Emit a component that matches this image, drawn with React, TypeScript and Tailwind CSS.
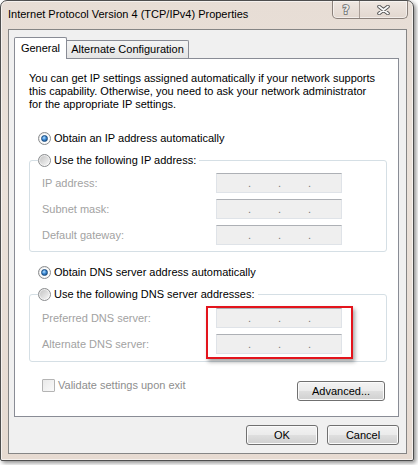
import React from "react";

function Radio({ checked }: { checked?: boolean }) {
  return (
    <span className="w-[13px] h-[13px] rounded-full border border-[#8a8c8e] bg-[linear-gradient(135deg,#e4e4e4,#ffffff)] flex items-center justify-center shrink-0">
      {checked ? (
        <span className="w-[9px] h-[9px] rounded-full bg-white flex items-center justify-center">
          <span className="w-[7px] h-[7px] rounded-full border border-[#1b4c7e] bg-[radial-gradient(circle_at_40%_35%,#b8e2ff_0%,#3d8ad6_45%,#0f3f75_100%)]" />
        </span>
      ) : (
        <span className="w-[9px] h-[9px] rounded-full bg-[linear-gradient(135deg,#c4c4c4,#f6f6f6)]" />
      )}
    </span>
  );
}

function IpField() {
  return (
    <div className="w-[126px] h-[20px] border border-[#dfe3e8] border-t-[#adb0b5] bg-[#efefef] flex items-center pl-[31px] text-[#7c7c7c]">
      <span className="w-[30px]">.</span>
      <span className="w-[30px]">.</span>
      <span className="w-[30px]">.</span>
    </div>
  );
}

function FieldRow({ label }: { label: string }) {
  return (
    <div className="flex items-center h-[20px] pl-[12px]">
      <span className="w-[174px] text-[#a2a2a2]">{label}</span>
      <IpField />
    </div>
  );
}

function Button({ children, w }: { children: React.ReactNode; w: string }) {
  return (
    <div
      className={`${w} h-[20px] rounded-[3px] border border-[#707070] bg-[linear-gradient(to_bottom,#f3f3f3_0%,#ebebeb_48%,#dedede_52%,#d0d0d0_100%)] shadow-[inset_0_0_0_1px_#fbfbfb] flex items-center justify-center text-black`}
    >
      {children}
    </div>
  );
}

export default function App() {
  return (
    <div className="w-[418px] h-[465px] bg-white overflow-hidden font-['Liberation_Sans',Arial,sans-serif] text-[11px] text-black">
      <div className="w-[414px] h-[461px] border border-[#4e4e4e] rounded-t-[7px] rounded-b-[2px] bg-[linear-gradient(to_bottom,#e7ddd5_0%,#ebe2da_40%,#e6dad1_100%)] shadow-[2px_2px_4px_rgba(0,0,0,0.45),inset_0_0_0_1px_rgba(255,255,255,0.6)] flex flex-col">
        {/* title bar */}
        <div className="h-[28px] flex justify-between items-start shrink-0">
          <span className="pl-[7px] pt-[7px] leading-[13px] whitespace-nowrap">
            Internet Protocol Version 4 (TCP/IPv4) Properties
          </span>
          <div className="mr-[5px] flex h-[18px] rounded-b-[5px] border border-t-0 border-[#8b817b] bg-[linear-gradient(to_bottom,#efe7e1,#e2d7cf)] shadow-[inset_0_0_0_1px_rgba(255,255,255,0.55)] overflow-hidden">
            <div className="w-[27px] h-full flex items-center justify-center border-r border-[#a89d96]">
              <span className="font-['DejaVu_Sans',sans-serif] font-bold text-[12px] leading-none text-[#ececec] [-webkit-text-stroke:1.6px_#6a6a6a] [paint-order:stroke_fill]">
                ?
              </span>
            </div>
            <div className="w-[47px] h-full flex items-center justify-center">
              <svg width="13" height="10" viewBox="0 0 13 10">
                <path d="M2 1.5 L11 8.5 M11 1.5 L2 8.5" stroke="#555" strokeWidth="3.6" strokeLinecap="round" />
                <path d="M2 1.5 L11 8.5 M11 1.5 L2 8.5" stroke="#fafafa" strokeWidth="1.8" strokeLinecap="round" />
              </svg>
            </div>
          </div>
        </div>

        {/* client area */}
        <div className="ml-[7px] mr-[6px] mb-[6px] flex-1 border border-[#858585] bg-[#f0f0f0] pl-[5px] pr-[7px] pt-[7px] flex flex-col">
          {/* tabs */}
          <div className="flex items-end h-[21px]">
            <div className="relative z-10 -mb-px w-[53px] h-[22px] bg-white border border-b-0 border-[#898c95] rounded-t-[2px] flex items-center justify-center pb-[1px]">
              General
            </div>
            <div className="w-[122px] h-[18px] border border-l-0 border-b-0 border-[#898c95] rounded-tr-[2px] bg-[linear-gradient(to_bottom,#f4f4f4,#e4e4e4)] flex items-center justify-center">
              Alternate Configuration
            </div>
          </div>

          {/* panel */}
          <div className="relative h-[359px] border border-[#898c95] bg-white pl-[14px] pr-[11px] pt-[13px] flex flex-col">
            <p className="leading-[13px] whitespace-nowrap">
              You can get IP settings assigned automatically if your network supports
              <br />
              this capability. Otherwise, you need to ask your network administrator
              <br />
              for the appropriate IP settings.
            </p>

            <div className="mt-[20px] pl-[9px] h-[14px] flex items-center gap-[3px]">
              <Radio checked />
              <span>Obtain an IP address automatically</span>
            </div>

            <fieldset className="mt-[8px] w-[358px] border border-[#d5dfe5] rounded-[3px] pb-[6px]">
              <legend className="ml-[8px] pr-[3px] h-[14px]">
                <span className="flex items-center gap-[3px] h-[14px]">
                  <Radio />
                  <span>Use the following IP address:</span>
                </span>
              </legend>
              <div className="pt-[6px] flex flex-col gap-[6px]">
                <FieldRow label="IP address:" />
                <FieldRow label="Subnet mask:" />
                <FieldRow label="Default gateway:" />
              </div>
            </fieldset>

            <div className="mt-[13px] pl-[9px] h-[14px] flex items-center gap-[3px]">
              <Radio checked />
              <span>Obtain DNS server address automatically</span>
            </div>

            <fieldset className="mt-[8px] w-[358px] border border-[#d5dfe5] rounded-[3px] pb-[7px]">
              <legend className="ml-[8px] pr-[3px] h-[14px]">
                <span className="flex items-center gap-[3px] h-[14px]">
                  <Radio />
                  <span>Use the following DNS server addresses:</span>
                </span>
              </legend>
              <div className="pt-[7px] flex flex-col gap-[6px]">
                <FieldRow label="Preferred DNS server:" />
                <FieldRow label="Alternate DNS server:" />
              </div>
            </fieldset>

            <div className="mt-[16px] w-[358px] flex justify-between items-start">
              <div className="pl-[13px] h-[14px] flex items-center gap-[3px]">
                <span className="w-[13px] h-[13px] border border-[#b4b4b4] rounded-[1px] bg-[linear-gradient(135deg,#e9e9e9,#fafafa)] shrink-0" />
                <span className="text-[#8e8e8e]">Validate settings upon exit</span>
              </div>
              <div className="mt-[3px] mr-[2px]">
                <Button w="w-[88px]">Advanced...</Button>
              </div>
            </div>

            {/* red highlight annotation */}
            <div className="absolute left-[191px] top-[247px] w-[147px] h-[53px] border-2 border-[#e3141c] shadow-[2px_3px_4px_rgba(0,0,0,0.35)]" />
          </div>

          {/* bottom buttons */}
          <div className="mt-[8px] flex justify-end gap-[9px]">
            <Button w="w-[72px]">OK</Button>
            <Button w="w-[72px]">Cancel</Button>
          </div>
        </div>
      </div>
    </div>
  );
}
